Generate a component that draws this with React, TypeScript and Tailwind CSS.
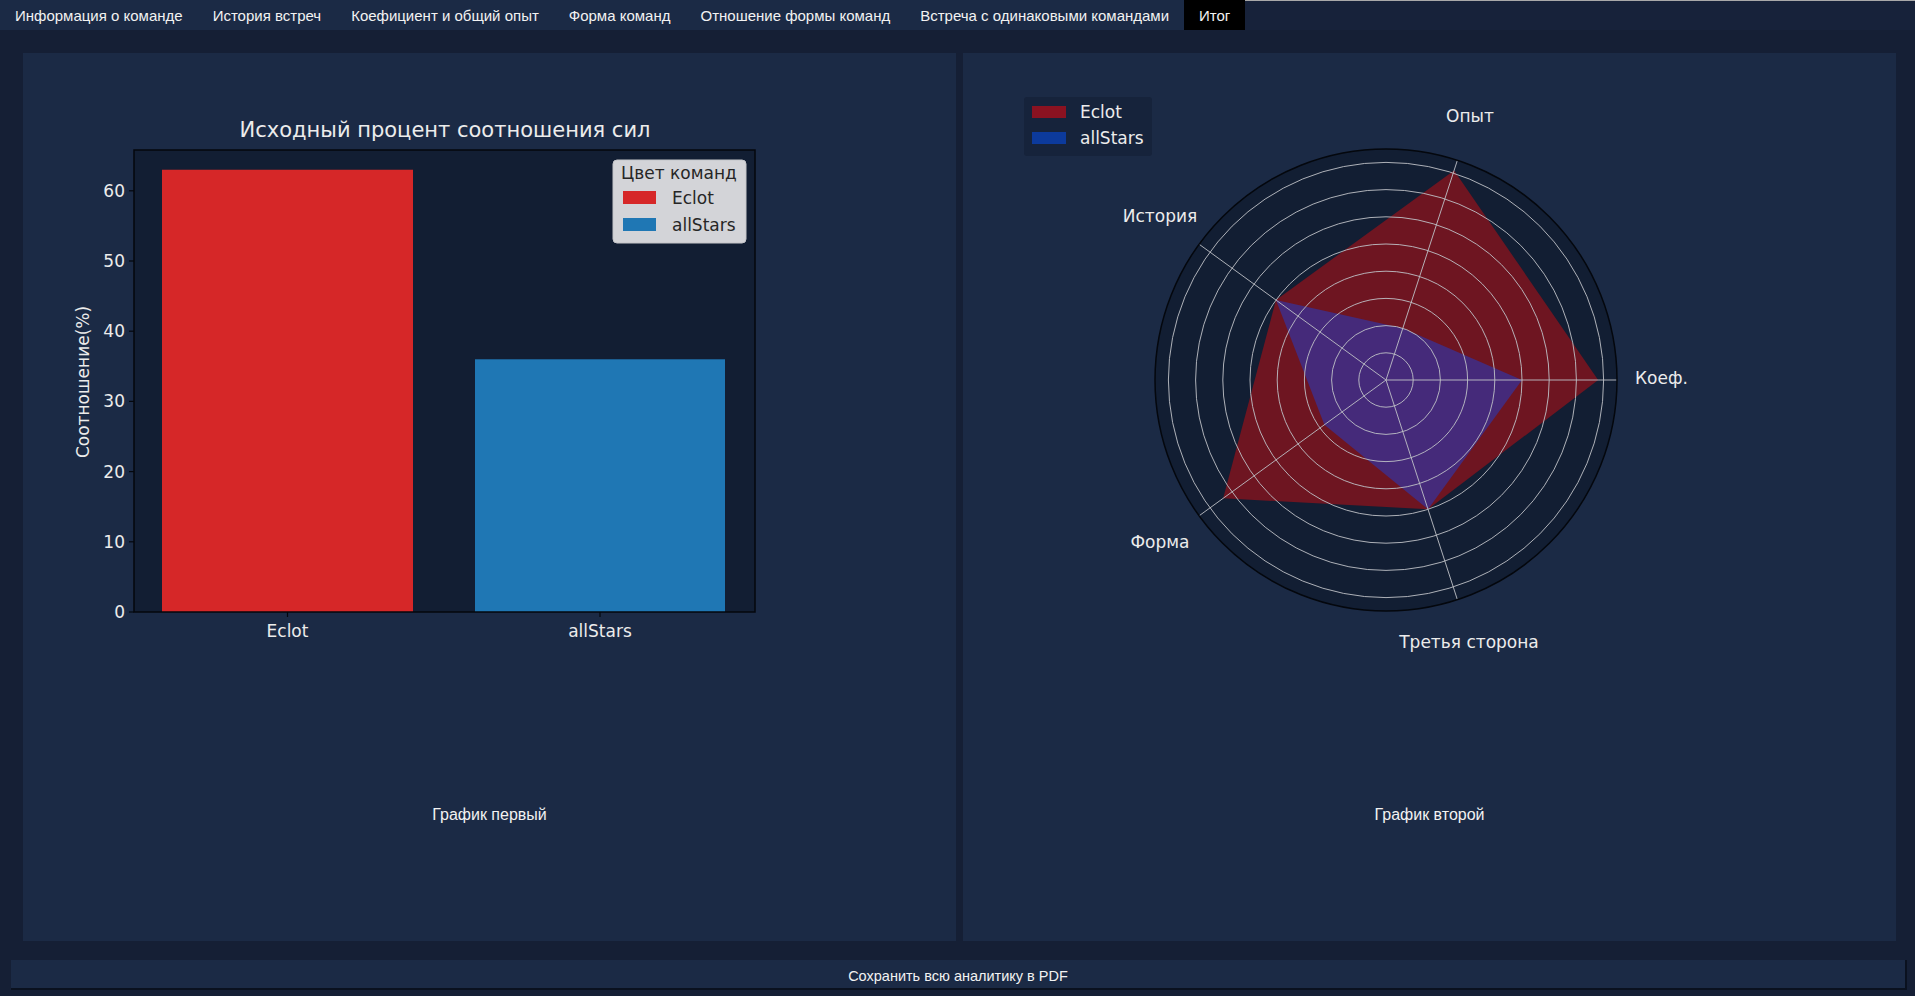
import React from "react";

const TABS = [
    "Информация о команде",
    "История встреч",
    "Коефициент и общий опыт",
    "Форма команд",
    "Отношение формы команд",
    "Встреча с одинаковыми командами",
    "Итог",
];

const CHART_FONT = {fontFamily: '"DejaVu Sans", sans-serif'};

// bar chart geometry, in panel coordinates
const AX = {x0: 111, x1: 732, y0: 96, y1: 558};
const PX_PER_UNIT = 7.02;
const yOf = (v: number) => AX.y1 - v * PX_PER_UNIT;

const BarChart = () => {
    const ticks = [0, 10, 20, 30, 40, 50, 60];
    return (
        <svg viewBox="0 0 933 700" className="block w-full h-[700px] mt-px" style={CHART_FONT}>
            <text x={422} y={83} textAnchor="middle" fontSize={21} fill="#ececec">
                Исходный процент соотношения сил
            </text>
            <rect x={AX.x0} y={AX.y0} width={AX.x1 - AX.x0} height={AX.y1 - AX.y0} fill="#121e33" />
            <rect x={139} y={yOf(63)} width={251} height={63 * PX_PER_UNIT} fill="#d62728" />
            <rect x={452} y={yOf(36)} width={250} height={36 * PX_PER_UNIT} fill="#1f77b4" />
            <rect x={AX.x0} y={AX.y0} width={AX.x1 - AX.x0} height={AX.y1 - AX.y0} fill="none" stroke="#04070d" strokeWidth={1.5} />
            {ticks.map((t) => (
                <g key={t}>
                    <line x1={AX.x0 - 5} x2={AX.x0} y1={yOf(t)} y2={yOf(t)} stroke="#04070d" strokeWidth={1.2} />
                    <text x={AX.x0 - 9} y={yOf(t) + 6} textAnchor="end" fontSize={17} fill="#ececec">{t}</text>
                </g>
            ))}
            {[{x: 264.5, l: "Eclot"}, {x: 577, l: "allStars"}].map((t) => (
                <g key={t.l}>
                    <line x1={t.x} x2={t.x} y1={AX.y1} y2={AX.y1 + 5} stroke="#04070d" strokeWidth={1.2} />
                    <text x={t.x} y={583} textAnchor="middle" fontSize={17} fill="#ececec">{t.l}</text>
                </g>
            ))}
            <text x={0} y={0} transform="translate(66 328) rotate(-90)" textAnchor="middle" fontSize={17} fill="#ececec">
                Соотношение(%)
            </text>
            {/* legend */}
            <rect x={590} y={106} width={133} height={83} rx={4} fill="#d3d4d8" stroke="#c4c5c9" />
            <text x={656} y={125} textAnchor="middle" fontSize={17} fill="#262626">Цвет команд</text>
            <rect x={600} y={137} width={33} height={13} fill="#d62728" />
            <text x={649} y={150} fontSize={17} fill="#262626">Eclot</text>
            <rect x={600} y={164} width={33} height={13} fill="#1f77b4" />
            <text x={649} y={177} fontSize={17} fill="#262626">allStars</text>
        </svg>
    );
};

const CX = 423;
const CY = 326;
const STEP = 27.2;
const ECLOT = [7.8, 8.1, 5.0, 7.4, 5.0];
const ALL_STARS = [5.0, 2.0, 5.0, 2.8, 5.0];

const polar = (v: number, i: number) => {
    const a = (i * 72 * Math.PI) / 180;
    return [CX + v * STEP * Math.cos(a), CY - v * STEP * Math.sin(a)];
};

const toPoints = (vals: number[]) => vals.map((v, i) => polar(v, i).join(",")).join(" ");

const RadarChart = () => {
    const labels = [
        {l: "Коеф.", x: 672, y: 330, a: "start"},
        {l: "Опыт", x: 507, y: 68, a: "middle"},
        {l: "История", x: 197, y: 168, a: "middle"},
        {l: "Форма", x: 197, y: 494, a: "middle"},
        {l: "Третья сторона", x: 506, y: 594, a: "middle"},
    ];
    return (
        <svg viewBox="0 0 933 700" className="block w-full h-[700px] mt-px" style={CHART_FONT}>
            <circle cx={CX} cy={CY} r={231} fill="#121e33" />
            <polygon points={toPoints(ECLOT)} fill="#6e1521" />
            <polygon points={toPoints(ALL_STARS)} fill="#452a7a" />
            {[1, 2, 3, 4, 5, 6, 7, 8].map((r) => (
                <circle key={r} cx={CX} cy={CY} r={r * STEP} fill="none" stroke="#bfc1c6" strokeOpacity={0.9} strokeWidth={1} />
            ))}
            {[0, 1, 2, 3, 4].map((i) => {
                const [x, y] = polar(231 / STEP, i);
                return <line key={i} x1={CX} y1={CY} x2={x} y2={y} stroke="#bfc1c6" strokeOpacity={0.9} strokeWidth={1} />;
            })}
            <circle cx={CX} cy={CY} r={231} fill="none" stroke="#04070d" strokeWidth={1.5} />
            {labels.map((t) => (
                <text key={t.l} x={t.x} y={t.y} textAnchor={t.a as "start" | "middle"} fontSize={17} fill="#ececec">{t.l}</text>
            ))}
            {/* legend */}
            <rect x={61} y={43} width={128} height={59} rx={3} fill="#16233b" />
            <rect x={69} y={52} width={34} height={12} fill="#8b1221" />
            <text x={117} y={64} fontSize={17} fill="#ececec">Eclot</text>
            <rect x={69} y={78} width={34} height={12} fill="#0c3a9c" />
            <text x={117} y={90} fontSize={17} fill="#ececec">allStars</text>
        </svg>
    );
};

const Panel = ({caption, children}: {caption: string; children: React.ReactNode}) => (
    <div className="flex-1 flex flex-col bg-[#1b2a45] min-w-0">
        {children}
        <div className="mt-[51px] h-5 leading-5 text-center text-[16px] text-[#f2f2f2]">{caption}</div>
    </div>
);

export default function App() {
    return (
        <div className="h-screen w-full flex flex-col bg-[#151f35] overflow-hidden" style={{fontFamily: '"Liberation Sans", Arial, sans-serif'}}>
            <div className="h-[30px] flex shrink-0">
                {TABS.map((tab) => (
                    <div
                        key={tab}
                        className={`px-[15px] h-full flex items-center pt-[2px] text-[15px] text-[#f2f2f2] whitespace-nowrap ${
                            tab === "Итог" ? "bg-black" : "bg-[#1b2a45]"
                        }`}
                    >
                        {tab}
                    </div>
                ))}
                <div className="flex-1 border-t border-[#a9a9a9] bg-[#17223a]" />
            </div>
            <div className="flex-1 flex gap-[7px] pl-[23px] pr-[19px] pt-[23px] pb-[19px] min-h-0">
                <Panel caption="График первый">
                    <BarChart />
                </Panel>
                <Panel caption="График второй">
                    <RadarChart />
                </Panel>
            </div>
            <div className="pl-[11px] pr-[8px] pb-[6px] shrink-0">
                <button className="w-full h-[30px] pt-[5px] bg-[#1b2a45] border-b-2 border-r-2 border-[#0a111f] text-[14.5px] text-[#f2f2f2]">
                    Сохранить всю аналитику в PDF
                </button>
            </div>
        </div>
    );
}
